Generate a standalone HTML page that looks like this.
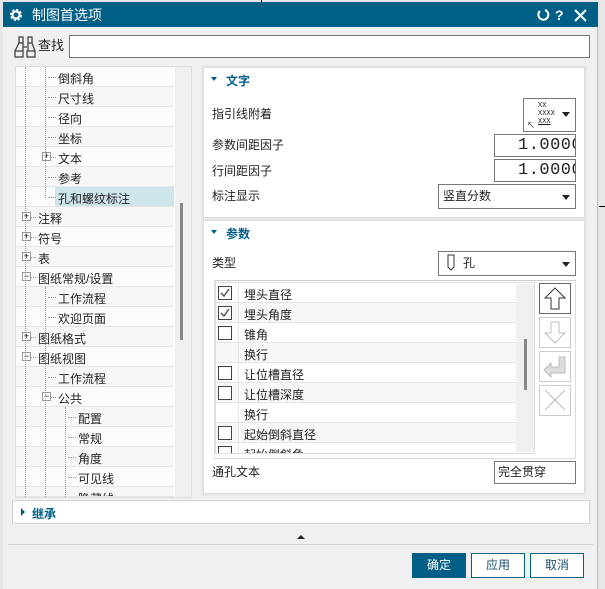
<!DOCTYPE html>
<html><head><meta charset="utf-8"><style>
*{box-sizing:border-box;margin:0;padding:0}
body{width:605px;height:589px;overflow:hidden;background:#e6e6e6;font-family:"Liberation Sans","Noto Sans CJK SC",sans-serif;font-size:12px;color:#222;position:relative}
.a{position:absolute}
.t{position:absolute;white-space:nowrap;line-height:14px}
.row{position:absolute;left:16px;width:158px;height:20px;border-bottom:1px solid #e6e6e6;background:#fafafa}
.row span{position:absolute;top:3px;white-space:nowrap}
.exp{position:absolute;width:9px;height:9px;border:1px solid #999;background:#fff;font-size:9px;line-height:7px;text-align:center;color:#000}
.box{position:absolute;background:#fff;border:1px solid #777}
.dd{position:absolute;width:0;height:0;border-left:5px solid transparent;border-right:5px solid transparent;border-top:5px solid #222}
.lr{position:absolute;left:216px;width:301px;height:20px;border-bottom:1px solid #e4e4e4}
.cb{position:absolute;left:2px;top:3px;width:14px;height:14px;border:1px solid #444;background:#fff}
.lr span{position:absolute;left:28px;top:3px;white-space:nowrap}
.btn{position:absolute;width:32px;height:31px;border:1px solid #ccc;background:#fff}
.bt{position:absolute;top:553px;height:25px;width:54px;border:1px solid #005f87;background:#fff;text-align:center;line-height:23px;color:#1b4f6b;font-size:12px}
.hd{position:absolute;color:#005f87;font-weight:bold;font-size:12px}
.num{position:absolute;overflow:hidden;background:#fff;border:1px solid #777}
.num div{position:absolute;left:23px;top:1px;font-size:17px;line-height:19px;font-family:'Liberation Mono',monospace;white-space:nowrap;letter-spacing:0.5px}
</style></head><body>
<div class="a" style="left:3px;top:2px;width:595px;height:587px;background:#f0f0f0;border-right:1px solid #bbb"></div>
<div class="a" style="left:599px;top:206px;width:6px;height:1px;background:#000"></div>
<div class="a" style="left:261px;top:0;width:1px;height:3px;background:#000"></div>
<!-- title -->
<div class="a" style="left:3px;top:2px;width:595px;height:25px;background:#005f87"></div>
<svg class="a" style="left:9px;top:8px" width="14" height="14" viewBox="0 0 14 14"><circle cx="7" cy="7" r="4.5" fill="none" stroke="#fff" stroke-width="3" stroke-dasharray="2.2 1.3"/><circle cx="7" cy="7" r="3.5" fill="none" stroke="#fff" stroke-width="2"/></svg>
<div class="t" style="left:32px;top:7px;color:#fff;font-size:14px;line-height:16px">制图首选项</div>
<svg class="a" style="left:536px;top:8px" width="60" height="14" viewBox="0 0 60 14"><path d="M4 3 A5 5 0 1 0 9 2" fill="none" stroke="#fff" stroke-width="2"/><text x="19" y="12" fill="#fff" font-size="14" font-weight="bold" font-family="Liberation Sans">?</text><path d="M39 2 L50 13 M50 2 L39 13" stroke="#fff" stroke-width="2"/></svg>
<!-- search -->
<svg class="a" style="left:13px;top:35px" width="24" height="24" viewBox="0 0 24 24" fill="none" stroke="#444" stroke-width="1.3"><rect x="6" y="2" width="4" height="6"/><rect x="15" y="2" width="4" height="6"/><path d="M6 8 L2 16 M10 8 L10 16 M15 8 L15 16 M19 8 L22 16"/><rect x="2" y="16" width="8" height="6"/><rect x="14" y="16" width="8" height="6"/><path d="M10 12 H14"/></svg>
<div class="t" style="left:38px;top:39px;font-size:13px">查找</div>
<div class="box" style="left:69px;top:35px;width:521px;height:23px"></div>
<!-- tree -->
<div class="a" style="left:15px;top:66px;width:177px;height:432px;background:#fff;border:1px solid #ddd;overflow:hidden">
</div>
<div id="tree"></div>
<div class="a" style="left:16px;top:67px;width:175px;height:430px;overflow:hidden;pointer-events:none">
<div class="a" style="left:9px;top:0;width:0;height:430px;border-left:1px dotted #999"></div>
<div class="a" style="left:29px;top:0;width:0;height:131px;border-left:1px dotted #999"></div>
<div class="a" style="left:29px;top:220px;width:0;height:210px;border-left:1px dotted #999"></div>
<div class="a" style="left:49px;top:340px;width:0;height:90px;border-left:1px dotted #999"></div>
</div>
<div class="a" style="left:175px;top:67px;width:16px;height:430px;background:#f0f0f0"></div>
<div class="a" style="left:180px;top:203px;width:3px;height:137px;background:#888"></div>
<!-- right panel -->
<div class="a" style="left:201px;top:65px;width:386px;height:431px;background:#e8e8e8"></div>
<div class="a" style="left:587px;top:65px;width:10px;height:431px;background:#f0f0f0"></div>
<div class="a" style="left:203px;top:67px;width:382px;height:151px;background:#fff;border:1px solid #ddd"></div>
<div class="a" style="left:203px;top:220px;width:382px;height:274px;background:#fff;border:1px solid #ddd"></div>
<div class="dd" style="left:211px;top:77px;border-width:4px 3.5px 0 3.5px;border-top-color:#005f87"></div>
<div class="hd" style="left:226px;top:72px">文字</div>
<div class="t" style="left:212px;top:107px">指引线附着</div>
<div class="box" style="left:523px;top:98px;width:53px;height:34px"></div>
<div class="t" style="left:538px;top:102px;font-size:7px;line-height:8px;font-family:'Liberation Mono',monospace">XX<br>XXXX<br><u>XXX</u></div>
<div class="t" style="left:527px;top:119px;font-size:8px">↖</div>
<div class="dd" style="left:562px;top:112px;border-width:5px 4px 0 4px"></div>
<div class="t" style="left:212px;top:138px">参数间距因子</div>
<div class="num" style="left:494px;top:134px;width:82px;height:23px"><div>1.0000</div></div>
<div class="t" style="left:212px;top:164px">行间距因子</div>
<div class="num" style="left:494px;top:159px;width:82px;height:23px"><div>1.0000</div></div>
<div class="t" style="left:212px;top:189px">标注显示</div>
<div class="box" style="left:438px;top:184px;width:138px;height:25px"></div>
<div class="t" style="left:443px;top:189px">竖直分数</div>
<div class="dd" style="left:562px;top:195px;border-width:5px 4px 0 4px"></div>
<div class="dd" style="left:211px;top:230px;border-width:4px 3.5px 0 3.5px;border-top-color:#005f87"></div>
<div class="hd" style="left:226px;top:225px">参数</div>
<div class="t" style="left:212px;top:256px">类型</div>
<div class="box" style="left:438px;top:251px;width:138px;height:25px"></div>
<svg class="a" style="left:446px;top:254px" width="10" height="18" viewBox="0 0 10 18"><path d="M2 1 H8 V13 L5 16 L2 13 Z" fill="none" stroke="#333"/></svg>
<div class="t" style="left:463px;top:256px">孔</div>
<div class="dd" style="left:562px;top:262px;border-width:5px 4px 0 4px"></div>
<div class="a" style="left:214px;top:280px;width:362px;height:179px;border:1px solid #ddd;border-top-color:#ccc"></div>
<div class="a" style="left:215px;top:282px;width:320px;height:172px;border:1px solid #ddd;background:#fff;overflow:hidden" id="lb"></div>
<div class="a" style="left:516px;top:284px;width:18px;height:168px;background:#f0f0f0"></div>
<div class="a" style="left:524px;top:339px;width:3px;height:51px;background:#888"></div>
<div class="btn" style="left:539px;top:283px;border-color:#666"></div>
<svg class="a" style="left:539px;top:283px" width="32" height="31"><path d="M16 5 L26 15 H20 V26 H12 V15 H6 Z" fill="none" stroke="#333"/></svg>
<div class="btn" style="left:539px;top:317px"></div>
<svg class="a" style="left:539px;top:317px" width="32" height="31"><path d="M16 26 L26 16 H20 V5 H12 V16 H6 Z" fill="none" stroke="#bbb"/></svg>
<div class="btn" style="left:539px;top:351px"></div>
<svg class="a" style="left:539px;top:351px" width="32" height="31"><path d="M26 6 V22 H12 V26 L5 19 L12 12 V16 H20 V6 Z" fill="#ddd" stroke="#bbb"/></svg>
<div class="btn" style="left:539px;top:385px"></div>
<svg class="a" style="left:539px;top:385px" width="32" height="31"><path d="M6 5 L26 25 M26 5 L6 25" stroke="#bbb"/></svg>
<div class="t" style="left:212px;top:465px">通孔文本</div>
<div class="box" style="left:494px;top:461px;width:82px;height:23px"></div>
<div class="t" style="left:498px;top:465px">完全贯穿</div>
<!-- inherit -->
<div class="a" style="left:12px;top:500px;width:578px;height:24px;background:#fff;border:1px solid #d4d4d4"></div>
<div class="a" style="left:21px;top:508px;width:0;height:0;border-top:4px solid transparent;border-bottom:4px solid transparent;border-left:4px solid #005f87"></div>
<div class="hd" style="left:32px;top:505px">继承</div>
<div class="a" style="left:297px;top:535px;width:0;height:0;border-left:4px solid transparent;border-right:4px solid transparent;border-bottom:4px solid #222"></div>
<div class="a" style="left:8px;top:544px;width:585px;height:1px;background:#d4d4d4"></div>
<div class="bt" style="left:412px;background:#005f87;color:#fff">确定</div>
<div class="bt" style="left:471px">应用</div>
<div class="bt" style="left:530px">取消</div>
<script>
var T=[["倒斜角",2,0],["尺寸线",2,0],["径向",2,0],["坐标",2,0],["文本",2,1],["参考",2,0],["孔和螺纹标注",2,0],["注释",1,1],["符号",1,1],["表",1,1],["图纸常规/设置",1,2],["工作流程",2,0],["欢迎页面",2,0],["图纸格式",1,1],["图纸视图",1,2],["工作流程",2,0],["公共",2,2],["配置",3,0],["常规",3,0],["角度",3,0],["可见线",3,0],["隐藏线",3,0]];
var h="";
T.forEach(function(r,i){var y=67+i*20;var tx=[0,38,58,78][r[1]];var bg=i%2?"#f7f7f7":"#fcfcfc";
var hgt=Math.min(20,497-y);
h+='<div class="row" style="top:'+y+'px;height:'+hgt+'px;background:'+bg+';overflow:hidden">';
if(i==6)h+='<div class="a" style="left:'+(tx-16-3)+'px;top:0;width:'+(158-(tx-16-3))+'px;height:20px;background:#cfe5ec"></div>';
h+='<div class="a" style="left:'+(tx-16-10)+'px;top:10px;width:8px;border-top:1px dotted #999"></div>';
if(r[2])h+='<div class="exp" style="left:'+(tx-16-16)+'px;top:5px">'+(r[2]==1?"+":"−")+'</div>';
h+='<span style="left:'+(tx-16)+'px">'+r[0]+'</span></div>';});
document.getElementById("tree").innerHTML=h;
var L=[["埋头直径",2],["埋头角度",2],["锥角",1],["换行",0],["让位槽直径",1],["让位槽深度",1],["换行",0],["起始倒斜直径",1],["起始倒斜角",1]];
var g="";L.forEach(function(r,i){g+='<div class="lr" style="left:0;top:'+(i*20)+'px;background:'+(i%2?"#f7f7f7":"#fff")+'"><div class="a" style="left:22px;top:0;width:1px;height:20px;background:#e8e8e8"></div>'+(r[1]?'<div class="cb">'+(r[1]==2?'<svg width="12" height="12" style="position:absolute;left:0;top:0"><path d="M2 6 L5 9 L10 2" fill="none" stroke="#555" stroke-width="1.5"/></svg>':'')+'</div>':'')+'<span>'+r[0]+'</span></div>';});
document.getElementById("lb").innerHTML=g;
</script>
</body></html>
